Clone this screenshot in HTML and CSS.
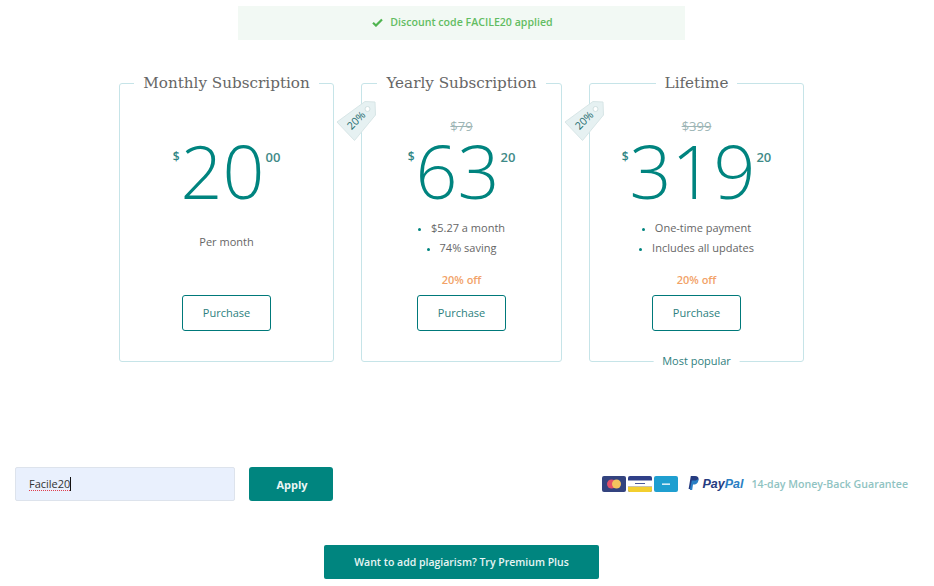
FILE: index.html
```html
<!DOCTYPE html>
<html lang="en">
<head>
<meta charset="utf-8">
<title>Pricing</title>
<link rel="stylesheet" href="styles.css">
</head>
<body>
<main class="page">
  <div class="notice">
    <svg class="notice-icon" viewBox="0 0 12 10" aria-hidden="true"><path d="M1 5.2 4.3 8.4 11 1.6" fill="none" stroke="#4fb44f" stroke-width="2.4"/></svg>
    <span>Discount code FACILE20 applied</span>
  </div>

  <section class="plans">
    <article class="plan plan-monthly">
      <h2 class="plan-title">Monthly Subscription</h2>
      <p class="old-price"></p>
      <div class="price"><span class="currency">$</span><span class="amount">20</span><span class="cents">00</span></div>
      <p class="per">Per month</p>
      <p class="off"></p>
      <a class="purchase">Purchase</a>
    </article>

    <article class="plan plan-yearly">
      <div class="tag">
        <svg viewBox="0 0 41 42" aria-hidden="true"><path d="M1 22 29 1.5 39 2 39.5 15 18.5 40.5Z" fill="#e6f1f2" stroke="#d8e6e7" stroke-linejoin="round"/><circle cx="31.500" cy="9" r="2.500" fill="#fff" stroke="#cfdfe0"/></svg>
        <span class="tag-text">20%</span>
      </div>
      <h2 class="plan-title">Yearly Subscription</h2>
      <p class="old-price">$79</p>
      <div class="price"><span class="currency">$</span><span class="amount">63</span><span class="cents">20</span></div>
      <ul class="features">
        <li>$5.27 a month</li>
        <li>74% saving</li>
      </ul>
      <p class="off">20% off</p>
      <a class="purchase">Purchase</a>
    </article>

    <article class="plan plan-lifetime">
      <div class="tag">
        <svg viewBox="0 0 41 42" aria-hidden="true"><path d="M1 22 29 1.5 39 2 39.5 15 18.5 40.5Z" fill="#e6f1f2" stroke="#d8e6e7" stroke-linejoin="round"/><circle cx="31.500" cy="9" r="2.500" fill="#fff" stroke="#cfdfe0"/></svg>
        <span class="tag-text">20%</span>
      </div>
      <h2 class="plan-title">Lifetime</h2>
      <p class="old-price">$399</p>
      <div class="price"><span class="currency">$</span><span class="amount">319</span><span class="cents">20</span></div>
      <ul class="features">
        <li>One-time payment</li>
        <li>Includes all updates</li>
      </ul>
      <p class="off">20% off</p>
      <a class="purchase">Purchase</a>
      <span class="popular">Most popular</span>
    </article>
  </section>

  <section class="checkout">
    <div class="coupon"><span class="coupon-value">Facile20</span></div>
    <button class="apply" type="button">Apply</button>
    <div class="trust">
      <svg class="pay-card" viewBox="0 0 24 16" aria-hidden="true"><rect width="24" height="16" rx="2" fill="#33437f"/><circle cx="9.500" cy="8" r="4.500" fill="#e2506a"/><circle cx="14.500" cy="8" r="4.500" fill="#f4c45e"/></svg>
      <svg class="pay-card" viewBox="0 0 24 16" aria-hidden="true"><rect width="24" height="16" rx="2" fill="#2f3f88"/><path d="M0 10.500H24V14a2 2 0 0 1-2 2H2a2 2 0 0 1-2-2Z" fill="#f3cf2f"/><rect y="4.500" width="24" height="6" fill="#fff"/><rect x="7" y="7" width="10" height="1" fill="#4a5a9a"/></svg>
      <svg class="pay-card" viewBox="0 0 24 16" aria-hidden="true"><rect width="24" height="16" rx="2" fill="#1f9fd0"/><rect x="8" y="7.500" width="8" height="1.300" fill="#fff"/></svg>
      <svg class="pp-mark" viewBox="0 0 11 15" aria-hidden="true"><path d="M2.800 0H7c2.600 0 3.900 1.300 3.500 3.500C10 6.300 8.300 7.600 5.700 7.600H4.300L3.400 13H.6Z" fill="#253b80"/><path d="M3.800 4.500h3.200c1 0 2.600-.6 3.300-1.800.6 2.800-1.100 5.900-4.400 5.900H5l-.8 5.400H1.800Z" fill="#2a7fc4"/></svg>
      <span class="pp-word"><span class="pp-pay">Pay</span><span class="pp-pal">Pal</span></span>
      <span class="guarantee">14-day Money-Back Guarantee</span>
    </div>
  </section>

  <div class="cta-row"><a class="cta">Want to add plagiarism? Try Premium Plus</a></div>
</main>
</body>
</html>
```

FILE: styles.css
```css
* { box-sizing: border-box; }
html, body { margin: 0; padding: 0; background: #fff; }
body { font-family: "Open Sans", "Noto Sans", sans-serif; color: #555; height: 586px; overflow: hidden; }
p, h2, ul { margin: 0; padding: 0; }

.page { width: 923px; padding-top: 6px; display: flex; flex-direction: column; align-items: center; }

.notice {
  width: 447px; height: 34px; padding: 0 0 2px 2px; background: #f2f9f4; color: #62bd62;
  display: flex; align-items: center; justify-content: center; gap: 7px;
  font-size: 10.600px; font-weight: 600;
}
.notice-icon { width: 11px; height: 9px; }

.plans { display: flex; gap: 27px; margin-top: 43px; align-items: flex-start; }
.plan {
  position: relative; width: 215px; height: 279px;
  border: 1px solid #c6e4e8; border-radius: 3px;
  display: flex; flex-direction: column; align-items: center;
}
.plan-yearly { width: 201px; }

.plan-title {
  margin-top: -11px; height: 21px; padding: 0 9px; background: #fff;
  font-family: "DejaVu Serif", "Liberation Serif", serif;
  font-size: 15.200px; font-weight: 400; line-height: 21px; color: #666; white-space: nowrap;
}
.old-price {
  height: 20px; margin-top: 22px; font-size: 13px; line-height: 20px;
  color: #9db5b5; text-decoration: line-through;
}
.price { display: flex; align-items: flex-start; height: 80px; color: #00847f; }
.currency { font-size: 12px; font-weight: 600; line-height: 16px; margin-top: 13px; margin-right: 1px; color: #2e8583; }
.amount { font-size: 73.500px; font-weight: 300; line-height: 70px; }
.cents { font-size: 13px; font-weight: 600; line-height: 16px; margin-top: 13px; margin-left: 1px; color: #3f8a88; }

.features { list-style: none; height: 54px; padding-top: 2px; font-size: 11px; font-weight: 500; color: #666; text-align: center; }
.features li { height: 20px; line-height: 20px; }
.features li::before {
  content: ""; display: inline-block; width: 3px; height: 3px; border-radius: 50%;
  background: #00847f; margin-right: 10px; vertical-align: middle;
}
.per { height: 54px; padding-top: 16px; font-size: 11px; line-height: 20px; font-weight: 500; color: #666; }

.off { height: 20px; font-size: 11px; font-weight: 600; line-height: 20px; color: #f2a268; }
.purchase {
  width: 89px; height: 36px; margin-top: 5px; padding-bottom: 2px;
  border: 1px solid #00797a; border-radius: 3px; color: #2c7f7e;
  display: flex; align-items: center; justify-content: center;
  font-size: 11px; font-weight: 500;
}

.tag { position: absolute; left: -26px; top: 16px; width: 41px; height: 42px; }
.tag svg { display: block; width: 41px; height: 42px; }
.tag-text {
  position: absolute; left: 6px; top: 12px; width: 28px; text-align: center;
  font-size: 10.500px; line-height: 16px; color: #1a6a6e; transform: rotate(-45deg);
}

.popular {
  position: absolute; left: 50%; bottom: -8px; transform: translateX(-50%);
  padding: 0 9px; background: #fff; white-space: nowrap;
  font-size: 11px; font-weight: 500; line-height: 16px; color: #2f7f80;
}

.checkout { width: 100%; margin-top: 105px; padding: 0 15px; display: flex; align-items: center; }
.coupon {
  width: 220px; height: 34px; padding-left: 13px; background: #e9f0fd;
  border: 1px solid #dde3ec; border-radius: 2px;
  display: flex; align-items: center;
}
.coupon-value {
  font-size: 11px; line-height: 14px; color: #333;
  border-right: 1px solid #111;
  text-decoration: underline dotted #e03c4c 1px; text-underline-offset: 2px;
}
.apply {
  width: 84px; height: 34px; margin-left: 14px; padding: 0 0 0 2px; border: 0; border-radius: 3px;
  background: #00857f; color: #eaf6f5; font-family: inherit; font-size: 11px; font-weight: 700;
}
.trust { margin-left: auto; display: flex; align-items: center; }
.pay-card { width: 24px; height: 16px; margin-right: 2px; }
.pp-mark { width: 11px; height: 15px; margin-left: 8px; margin-right: 4px; margin-top: -2px; }
.pp-word { font-family: "Liberation Sans", sans-serif; font-size: 12.500px; font-weight: 700; font-style: italic; margin-right: 8px; }
.pp-pay { color: #253b80; }
.pp-pal { color: #2a7fc4; }
.guarantee { font-size: 10.600px; font-weight: 600; color: #8fc3c2; }

.cta-row { margin-top: 44px; }
.cta {
  width: 275px; height: 34px; padding-bottom: 1px; background: #00857f; border-radius: 2px; color: #e8f5f4;
  display: flex; align-items: center; justify-content: center;
  font-size: 10.500px; font-weight: 600;
}
```
